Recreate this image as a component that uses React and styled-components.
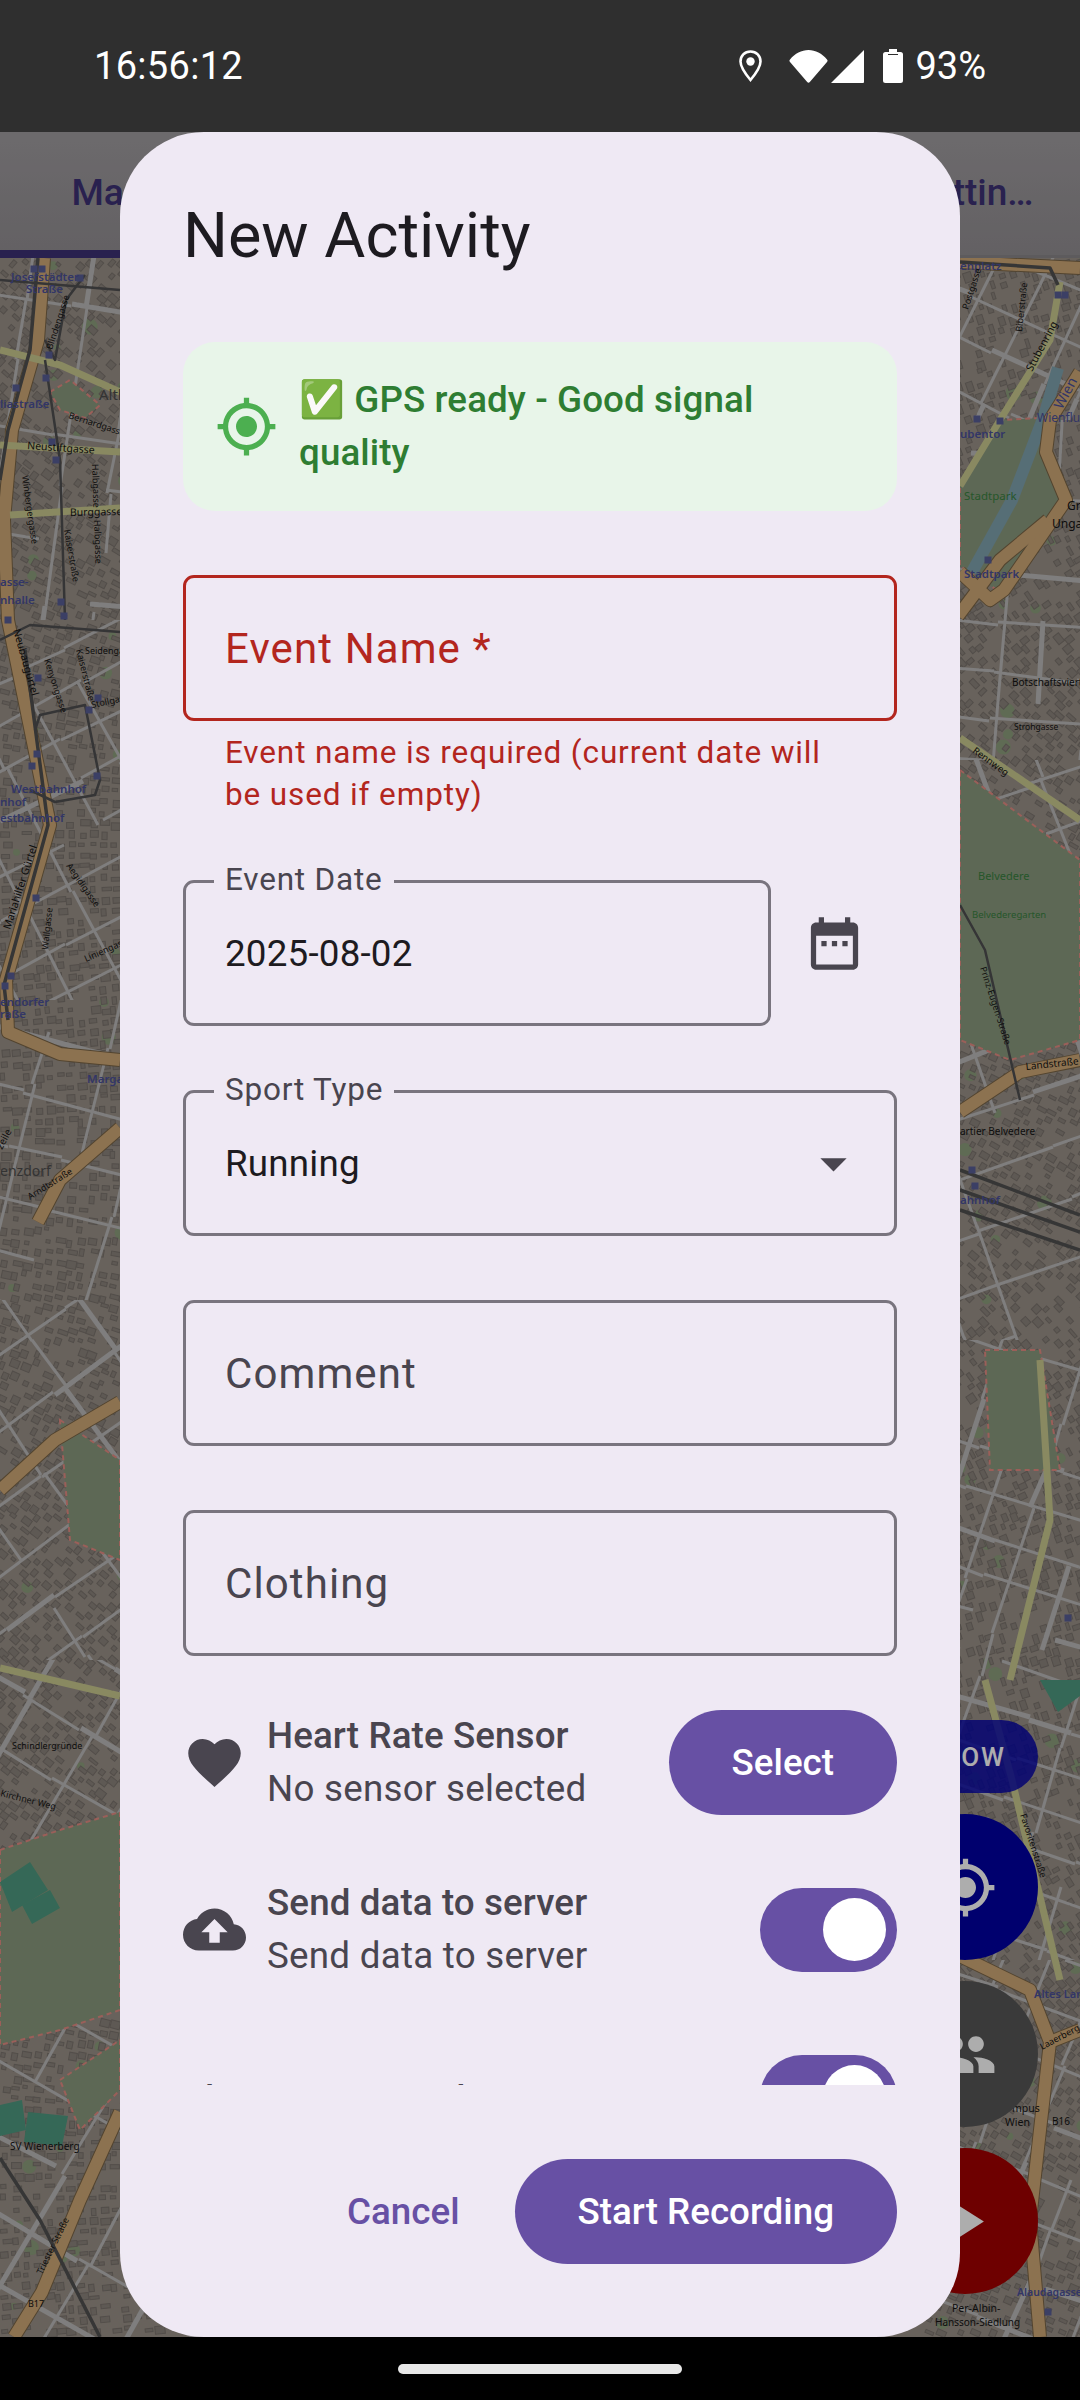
import React, { useMemo } from 'react'
import styled, { createGlobalStyle } from 'styled-components'

const colours = {
  primary: '#6750A4',
  surface: '#EFE9F4',
  onSurface: '#1D1B20',
  variant: '#49454F',
  outline: '#79747E',
  error: '#B3261E',
  tabInk: '#3D3175',
}

const icons = {
  gps: 'M12 8c-2.21 0-4 1.79-4 4s1.79 4 4 4 4-1.79 4-4-1.79-4-4-4zm8.94 3c-.46-4.17-3.77-7.48-7.94-7.94V1h-2v2.06C6.83 3.52 3.52 6.83 3.06 11H1v2h2.06c.46 4.17 3.77 7.48 7.94 7.94V23h2v-2.06c4.17-.46 7.48-3.77 7.94-7.94H23v-2h-2.06zM12 19c-3.87 0-7-3.13-7-7s3.13-7 7-7 7 3.13 7 7-3.13 7-7 7z',
  heart: 'M12 21.35l-1.45-1.32C5.4 15.36 2 12.28 2 8.5 2 5.42 4.42 3 7.5 3c1.74 0 3.41.81 4.5 2.09C13.09 3.81 14.76 3 16.5 3 19.58 3 22 5.42 22 8.5c0 3.78-3.4 6.86-8.55 11.54L12 21.35z',
  cloud: 'M19.35 10.04C18.67 6.59 15.64 4 12 4 9.11 4 6.6 5.64 5.35 8.04 2.34 8.36 0 10.91 0 14c0 3.31 2.69 6 6 6h13c2.76 0 5-2.24 5-5 0-2.64-2.05-4.78-4.65-4.96zM14 13v4h-4v-4H7l5-5 5 5h-3z',
  calendar: 'M9 11H7v2h2v-2zm4 0h-2v2h2v-2zm4 0h-2v2h2v-2zm2-7h-1V2h-2v2H8V2H6v2H5c-1.11 0-1.99.9-1.99 2L3 20c0 1.1.89 2 2 2h14c1.1 0 2-.9 2-2V6c0-1.1-.9-2-2-2zm0 16H5V9h14v11z',
  drop: 'M7 10l5 5 5-5z',
  group: 'M16 11c1.66 0 2.99-1.34 2.99-3S17.66 5 16 5c-1.66 0-3 1.34-3 3s1.34 3 3 3zm-8 0c1.66 0 2.99-1.34 2.99-3S9.66 5 8 5C6.34 5 5 6.34 5 8s1.34 3 3 3zm0 2c-2.33 0-7 1.17-7 3.5V19h14v-2.5c0-2.33-4.67-3.5-7-3.5zm8 0c-.29 0-.62.02-.97.05 1.16.84 1.97 1.97 1.97 3.45V19h6v-2.5c0-2.33-4.67-3.5-7-3.5z',
  play: 'M8 5v14l11-7z',
}

const GlobalStyle = createGlobalStyle`
  html, body {
    margin: 0;
    padding: 0;
    background: #000;
  }
  * {
    box-sizing: border-box;
  }
`

const Icon = ({ name, colour, className }) => (
  <IconSvg viewBox="0 0 24 24" className={className}>
    <path d={icons[name]} fill={colour || 'currentColor'} />
  </IconSvg>
)

const toPoints = (pts) => pts.map((p) => p.join(',')).join(' ')

// map features, in page coordinates
const districts = [
  { x: 0, y: 258, w: 130, h: 362, angle: 8, gap: 60 },
  { x: 0, y: 620, w: 130, h: 380, angle: -28, gap: 46 },
  { x: 0, y: 1000, w: 130, h: 300, angle: 15, gap: 54 },
  { x: 0, y: 1300, w: 130, h: 360, angle: -35, gap: 58 },
  { x: 0, y: 1660, w: 210, h: 677, angle: 30, gap: 66 },
  { x: 950, y: 258, w: 130, h: 162, angle: 25, gap: 44 },
  { x: 950, y: 420, w: 130, h: 340, angle: 5, gap: 42 },
  { x: 950, y: 760, w: 130, h: 580, angle: -20, gap: 50 },
  { x: 950, y: 1340, w: 130, h: 620, angle: 18, gap: 44 },
  { x: 900, y: 1960, w: 180, h: 377, angle: 22, gap: 52 },
]
const parks = [
  [[960, 482], [1000, 420], [1042, 418], [1062, 500], [1000, 592], [960, 566]],
  [[960, 770], [1080, 860], [1080, 1040], [1010, 1060], [960, 1040]],
  [[0, 1850], [60, 1830], [120, 1812], [120, 2010], [60, 2030], [0, 2045]],
  [[50, 392], [70, 380], [100, 405], [85, 418], [60, 410]],
  [[985, 1350], [1040, 1350], [1060, 1470], [990, 1470]],
  [[60, 1420], [120, 1460], [120, 1560], [70, 1540]],
  [[60, 2080], [120, 2040], [120, 2090], [80, 2130]],
]
const sportsFields = [
  [[0, 1882], [30, 1862], [48, 1890], [12, 1912]],
  [[22, 1905], [50, 1890], [60, 1908], [32, 1924]],
  [[0, 2105], [22, 2100], [26, 2130], [0, 2136]],
  [[28, 2112], [68, 2116], [62, 2146], [24, 2142]],
  [[1040, 1680], [1080, 1680], [1080, 1696], [1058, 1712]],
]
const water = [
  [[1058, 368], [1044, 416], [1012, 500], [972, 572]],
]
const motorways = [
  [[44, 258], [38, 340], [12, 430], [4, 520], [8, 620], [50, 825], [6, 980], [8, 1032], [60, 1054], [120, 1060]],
  [[120, 1128], [60, 1180], [38, 1222]],
  [[0, 1490], [55, 1440], [120, 1402]],
  [[120, 2112], [80, 2200], [42, 2292], [14, 2337]],
  [[960, 262], [1080, 268]],
  [[1080, 372], [1050, 420], [1046, 452], [1066, 500], [1004, 590], [990, 600], [960, 572]],
  [[958, 616], [1000, 560], [1048, 520]],
  [[960, 1112], [1020, 1072], [1080, 1060]],
  [[960, 1956], [1030, 1990], [1050, 2042], [1040, 2130], [1030, 2220], [1040, 2337]],
  [[1050, 2042], [1080, 2030]],
]
const yellowRoads = [
  [[0, 350], [60, 365], [120, 392]],
  [[0, 445], [120, 452]],
  [[10, 515], [120, 508]],
  [[1060, 282], [1050, 340], [1000, 420], [960, 486]],
  [[960, 738], [1080, 820]],
  [[985, 1680], [1012, 1780], [1060, 1980]],
  [[1040, 1360], [1050, 1520], [1010, 1680]],
  [[0, 1668], [120, 1696]],
]
const railways = [
  [[38, 258], [30, 350], [8, 430], [0, 480]],
  [[25, 650], [48, 825], [4, 985], [8, 1020]],
  [[960, 262], [1050, 268], [1058, 285]],
  [[0, 2158], [40, 2220], [100, 2337]],
  [[960, 1170], [1080, 1215]],
  [[960, 1190], [1080, 1232]],
  [[960, 1210], [1080, 1250]],
]
const transit = [
  [[45, 340], [55, 360], [66, 300], [85, 275]],
  [[45, 360], [60, 460], [65, 620]],
  [[0, 280], [120, 290]],
  [[0, 640], [30, 625], [120, 632]],
  [[35, 730], [40, 715], [85, 705], [100, 780], [95, 795], [55, 802], [30, 790]],
  [[960, 905], [985, 950], [1020, 1100]],
]
const stations = [
  [34, 269], [42, 269], [80, 278], [49, 355], [46, 378], [16, 388], [52, 442], [56, 460],
  [61, 602], [64, 616], [8, 620], [38, 678], [37, 754], [32, 766], [98, 698], [89, 710],
  [97, 776], [36, 898], [11, 976], [5, 986], [1065, 295], [1058, 295], [1000, 421], [977, 419],
  [988, 560], [972, 1170], [975, 1186], [1068, 1618], [1048, 2312],
]
const labels = [
  ['Josefstädter', 11, 281, 0, 'blue', 11.5, 600],
  ['Straße', 26, 293, 0, 'blue', 11.5, 600],
  ['Blindengasse', 52, 350, -72, 'ink', 9],
  ['Altl', 99, 400, 0, 'faint', 15],
  ['Bernardgasse', 68, 418, 18, 'ink', 9],
  ['liastraße', 0, 408, 0, 'blue', 11.5, 600],
  ['Neustiftgasse', 27, 449, 4, 'ink', 10.5],
  ['Winbergergasse', 22, 476, 82, 'ink', 9],
  ['Halbgasse', 92, 464, 88, 'ink', 9],
  ['Burggasse', 70, 516, -1, 'ink', 10.5],
  ['Halbgasse', 94, 520, 88, 'ink', 9],
  ['Kaiserstraße', 64, 530, 80, 'ink', 9],
  ['asse-', 0, 586, 0, 'blue', 11.5, 600],
  ['nhalle', 0, 604, 0, 'blue', 11.5, 600],
  ['Seidengasse', 85, 654, 0, 'ink', 9],
  ['Neubaugürtel', 13, 630, 74, 'ink', 10.5],
  ['Kenyongasse', 44, 660, 72, 'ink', 9],
  ['Kaiserstraße', 76, 650, 76, 'ink', 9],
  ['Stollgasse', 92, 708, -12, 'ink', 9],
  ['Westbahnhof', 11, 793, 0, 'blue', 11.5, 600],
  ['nhof', 0, 806, 0, 'blue', 11.5, 600],
  ['estbahnhof', 0, 822, 0, 'blue', 11.5, 600],
  ['Mariahilfer Gürtel', 10, 930, -72, 'ink', 10.5],
  ['Aegidigasse', 66, 866, 55, 'ink', 9],
  ['Wallgasse', 48, 950, -84, 'ink', 9],
  ['Liniengasse', 86, 962, -24, 'ink', 9],
  ['endorfer', 0, 1006, 0, 'blue', 11.5, 600],
  ['raße', 0, 1018, 0, 'blue', 11.5, 600],
  ['Marga', 87, 1083, 0, 'blue', 11.5, 600],
  ['zeile', 2, 1150, -62, 'ink', 10],
  ['enzdorf', 0, 1176, 0, 'faint', 14],
  ['Arndtstraße', 30, 1200, -32, 'ink', 9],
  ['Schindlergründe', 12, 1749, 0, 'ink', 9],
  ['Kirchner Weg', 0, 1796, 14, 'ink', 9],
  ['SV Wienerberg', 10, 2150, 0, 'ink', 10],
  ['Triester Straße', 42, 2275, -64, 'ink', 9],
  ['B17', 28, 2307, 0, 'ink', 9],
  ['enplatz', 960, 270, 0, 'blue', 11.5, 600],
  ['Postgasse', 968, 310, -72, 'ink', 9],
  ['Biberstraße', 1022, 332, -84, 'ink', 9],
  ['Stubenring', 1032, 372, -62, 'ink', 10.5],
  ['Wien', 1062, 410, -62, 'blue', 14],
  ['Wienfluss', 1037, 422, 0, 'blue', 12],
  ['ubentor', 960, 438, 0, 'blue', 11.5, 600],
  ['Stadtpark', 964, 500, 0, 'green', 11.5],
  ['Stadtpark', 964, 578, 0, 'blue', 11.5, 600],
  ['Gr', 1067, 510, 0, 'ink', 12],
  ['Ungar', 1052, 528, 0, 'ink', 12],
  ['Botschaftsviertel', 1012, 686, 0, 'ink', 10],
  ['Strohgasse', 1014, 730, 0, 'ink', 8.5],
  ['Rennweg', 972, 752, 36, 'ink', 9.5],
  ['Belvedere', 978, 880, 0, 'green', 11],
  ['Belvederegarten', 972, 918, 0, 'green', 9.5],
  ['Prinz-Eugen-Straße', 980, 968, 72, 'ink', 9],
  ['Landstraße', 1026, 1070, -6, 'ink', 10],
  ['artier Belvedere', 960, 1135, 0, 'ink', 10],
  ['ahnhof', 960, 1204, 0, 'blue', 11.5, 600],
  ['Favoritenstraße', 1020, 1815, 72, 'ink', 9],
  ['Altes Lan', 1034, 1998, 0, 'blue', 11, 600],
  ['Laaerberg', 1042, 2050, -28, 'ink', 9],
  ['mpus', 1012, 2112, 0, 'ink', 10.5],
  ['Wien', 1005, 2126, 0, 'ink', 10.5],
  ['B16', 1052, 2125, 0, 'ink', 10],
  ['Alaudagasse', 1017, 2296, 0, 'blue', 10.5, 600],
  ['Per-Albin-', 952, 2312, 0, 'ink', 10.5],
  ['Hansson-Siedlung', 935, 2326, 0, 'ink', 10],
]
const labelColours = { blue: '#4A5099', ink: '#141414', faint: '#4c4c4c', green: '#38803e' }

const mulberry = (seed) => () => {
  seed |= 0
  seed = (seed + 0x6d2b79f5) | 0
  let t = Math.imul(seed ^ (seed >>> 15), 1 | seed)
  t = (t + Math.imul(t ^ (t >>> 7), 61 | t)) ^ t
  return ((t ^ (t >>> 14)) >>> 0) / 4294967296
}

// one set of streets: a broken grid turned by the district's angle
function districtStreets(d, rand) {
  const cx = d.x + d.w / 2
  const cy = d.y + d.h / 2
  const reach = Math.hypot(d.w, d.h) / 2 + d.gap
  const rad = (d.angle * Math.PI) / 180
  const cos = Math.cos(rad)
  const sin = Math.sin(rad)
  const place = (u, v) => [Math.round(cx + u * cos - v * sin), Math.round(cy + u * sin + v * cos)]
  const lines = []
  const run = (along) => {
    for (let v = -reach; v < reach; v += d.gap * (0.8 + rand() * 0.4)) {
      let u = -reach
      while (u < reach) {
        const length = d.gap * (1 + Math.floor(rand() * 3))
        if (rand() > 0.18) {
          const tilt = (rand() - 0.5) * 8
          lines.push({
            points: along
              ? [place(u, v), place(u + length, v + tilt)]
              : [place(v, u), place(v + tilt, u + length)],
            width: rand() < 0.15 ? 5 : 3,
          })
        }
        u += length
      }
    }
  }
  run(true)
  run(false)
  return lines
}

function buildTexture() {
  const rand = mulberry(1966)
  const strips = [[0, 210], [925, 1080]]
  const houses = []
  const patches = []
  strips.forEach(([from, to]) => {
    for (let y = 258; y < 2337; y += 11) {
      for (let x = from; x < to; x += 11) {
        const angle = 18 + 24 * Math.sin(y / 210) + (x > 500 ? 30 : 0)
        if (rand() < 0.8) {
          houses.push({
            x: x + rand() * 4,
            y: y + rand() * 4,
            w: 4 + rand() * 6,
            h: 3 + rand() * 5,
            a: Math.round(angle),
          })
        }
        if (rand() < 0.025) {
          patches.push({ x: x + rand() * 10, y: y + rand() * 10, r: 3 + rand() * 5 })
        }
      }
    }
  })
  const streets = districts.map((d) => ({ ...d, lines: districtStreets(d, rand) }))
  return { houses, patches, streets }
}

function OsmMap() {
  const { houses, patches, streets } = useMemo(buildTexture, [])
  return (
    <MapCanvas viewBox="0 258 1080 2079">
      <rect x="0" y="258" width="1080" height="2079" fill="#9A9188" />
      {patches.map((p, i) => (
        <circle key={i} cx={p.x} cy={p.y} r={p.r} fill="#8C9E7C" />
      ))}
      {houses.map((h, i) => (
        <rect
          key={i}
          x={h.x}
          y={h.y}
          width={h.w}
          height={h.h}
          fill="#8B837C"
          stroke="#7A736D"
          strokeWidth="1"
          transform={`rotate(${h.a} ${h.x} ${h.y})`}
        />
      ))}
      {streets.map((d, i) => (
        <svg key={i} x={d.x} y={d.y} width={d.w} height={d.h} viewBox={`${d.x} ${d.y} ${d.w} ${d.h}`}>
          {d.lines.map((line, j) => (
            <polyline
              key={j}
              points={toPoints(line.points)}
              fill="none"
              stroke="#BBBABA"
              strokeWidth={line.width}
            />
          ))}
        </svg>
      ))}
      {parks.map((p, i) => (
        <polygon key={i} points={toPoints(p)} fill="#8A9A7E" />
      ))}
      {sportsFields.map((p, i) => (
        <polygon key={i} points={toPoints(p)} fill="#4F9A80" />
      ))}
      {parks.map((p, i) => (
        <polygon key={i} points={toPoints(p)} fill="none" stroke="#E58C84" strokeWidth="2" strokeDasharray="5 4" />
      ))}
      {water.map((w, i) => (
        <polyline key={i} points={toPoints(w)} fill="none" stroke="#7FA2AE" strokeWidth="12" />
      ))}
      {motorways.map((m, i) => (
        <polyline key={i} points={toPoints(m)} fill="none" stroke="#7A6546" strokeWidth="14" strokeLinejoin="round" />
      ))}
      {motorways.map((m, i) => (
        <polyline key={i} points={toPoints(m)} fill="none" stroke="#CFA877" strokeWidth="12" strokeLinejoin="round" />
      ))}
      {yellowRoads.map((r, i) => (
        <polyline key={i} points={toPoints(r)} fill="none" stroke="#CACA90" strokeWidth="7" strokeLinejoin="round" />
      ))}
      {railways.map((r, i) => (
        <polyline key={i} points={toPoints(r)} fill="none" stroke="#505050" strokeWidth="3.500" strokeLinejoin="round" />
      ))}
      {transit.map((r, i) => (
        <polyline key={i} points={toPoints(r)} fill="none" stroke="#4E4E50" strokeWidth="2.500" strokeLinejoin="round" />
      ))}
      {stations.map(([x, y], i) => (
        <rect key={i} x={x - 3.5} y={y - 3.5} width="7" height="7" fill="#585D96" />
      ))}
      {labels.map(([text, x, y, rotate, tone, size, weight], i) => (
        <MapLabel
          key={i}
          x={x}
          y={y}
          fontSize={size}
          fontWeight={weight || 400}
          fill={labelColours[tone]}
          transform={rotate ? `rotate(${rotate} ${x} ${y})` : undefined}
        >
          {text}
        </MapLabel>
      ))}
    </MapCanvas>
  )
}

function StatusBar() {
  return (
    <StatusRow>
      <StatusTime>16:56:12</StatusTime>
      <StatusIcons>
        <StatusGlyph width="23" height="32" viewBox="0 0 23 32">
          <path
            d="M11.5 1.5C5.6 1.5 1.5 6 1.5 11.5 1.5 18 11.5 30 11.5 30S21.5 18 21.5 11.5C21.5 6 17.4 1.5 11.5 1.5Z"
            fill="none"
            stroke="#fff"
            strokeWidth="2.6"
          />
          <circle cx="11.5" cy="11.5" r="4.2" fill="#fff" />
        </StatusGlyph>
        <StatusGlyph $gap={27} width="39" height="33" viewBox="0 0 39 33">
          <path d="M1 9.5C6 3.5 12.5 0 19.5 0S33 3.5 38 9.5c.8 1 .8 1.6 0 2.5L20.8 32c-.8.9-1.8.9-2.6 0L1 12c-.8-.9-.8-1.5 0-2.5Z" fill="#fff" />
        </StatusGlyph>
        <StatusGlyph $gap={3} width="33" height="33" viewBox="0 0 33 33">
          <path d="M33 0V32a1 1 0 0 1-1 1H0Z" fill="#fff" />
        </StatusGlyph>
        <StatusGlyph $gap={19} width="20" height="34" viewBox="0 0 20 34">
          <path d="M6 0h8v3h3.5A2.5 2.5 0 0 1 20 5.5V31.5A2.5 2.5 0 0 1 17.500 34H2.500A2.500 2.500 0 0 1 0 31.500V5.500A2.500 2.500 0 0 1 2.500 3H6Z" fill="#fff" />
          <rect x="5" y="5" width="10" height="1" fill="#2F2F2F" />
        </StatusGlyph>
        <StatusPercent>93%</StatusPercent>
      </StatusIcons>
    </StatusRow>
  )
}

function Background() {
  return (
    <AppContent>
      <TabBar>
        <Tab $active>Map</Tab>
        <Tab>Settin…</Tab>
      </TabBar>
      <MapArea>
        <OsmMap />
        <FabStack>
          <NowPill>NOW</NowPill>
          <Fab $colour="#0000A2">
            <FabIcon name="gps" />
          </Fab>
          <Fab $colour="#565656">
            <FabIcon name="group" />
          </Fab>
          <Fab $colour="#A20000">
            <FabIcon name="play" />
          </Fab>
        </FabStack>
      </MapArea>
    </AppContent>
  )
}

const OptionRow = ({ icon, title, subtitle, action }) => (
  <Row>
    {icon && <RowIcon name={icon} />}
    <RowText $single={!subtitle}>
      <RowTitle>{title}</RowTitle>
      {subtitle && <RowSubtitle>{subtitle}</RowSubtitle>}
    </RowText>
    {action}
  </Row>
)

const Toggle = () => (
  <SwitchTrack role="switch" aria-checked="true">
    <SwitchThumb />
  </SwitchTrack>
)

function ActivityDialog() {
  return (
    <Dialog>
      <DialogTitle>New Activity</DialogTitle>
      <Scroller>
        <FormStack>
          <GpsCard>
            <GpsIcon name="gps" />
            <GpsText>✅ GPS ready - Good signal quality</GpsText>
          </GpsCard>

          <div>
            <Field $error>
              <FieldPlaceholder $error>Event Name *</FieldPlaceholder>
            </Field>
            <HelperText>Event name is required (current date will be used if empty)</HelperText>
          </div>

          <DateRow>
            <Field $grow>
              <FieldLabel>Event Date</FieldLabel>
              <FieldValue>2025-08-02</FieldValue>
            </Field>
            <CalendarButton>
              <CalendarIcon name="calendar" />
            </CalendarButton>
          </DateRow>

          <Field>
            <FieldLabel>Sport Type</FieldLabel>
            <FieldValue>Running</FieldValue>
            <DropIcon name="drop" />
          </Field>

          <Field>
            <FieldPlaceholder>Comment</FieldPlaceholder>
          </Field>

          <Field>
            <FieldPlaceholder>Clothing</FieldPlaceholder>
          </Field>
        </FormStack>

        <RowStack>
          <OptionRow
            icon="heart"
            title="Heart Rate Sensor"
            subtitle="No sensor selected"
            action={<FilledButton>Select</FilledButton>}
          />
          <OptionRow
            icon="cloud"
            title="Send data to server"
            subtitle="Send data to server"
            action={<Toggle />}
          />
          <OptionRow title="Share Device with" action={<Toggle />} />
        </RowStack>
      </Scroller>
      <DialogActions>
        <TextButton>Cancel</TextButton>
        <FilledButton>Start Recording</FilledButton>
      </DialogActions>
    </Dialog>
  )
}

export default function App() {
  return (
    <>
      <GlobalStyle />
      <Screen>
        <StatusBar />
        <Stage>
          <Background />
          <Scrim>
            <ActivityDialog />
          </Scrim>
        </Stage>
        <NavBar>
          <NavPill />
        </NavBar>
      </Screen>
    </>
  )
}

const IconSvg = styled.svg`
  display: block;
  width: 63px;
  height: 63px;
  flex: none;
`

const Screen = styled.div`
  width: 1080px;
  height: 2400px;
  display: flex;
  flex-direction: column;
  overflow: hidden;
  font-family: Roboto, "Noto Sans", sans-serif;
  background: #000;
`

const StatusRow = styled.div`
  height: 132px;
  flex: none;
  padding: 0 94px;
  display: flex;
  align-items: center;
  justify-content: space-between;
  background: #2F2F2F;
  color: #fff;
`

const StatusTime = styled.span`
  font-size: 38px;
  letter-spacing: 0.3px;
`

const StatusIcons = styled.div`
  display: flex;
  align-items: center;
`

const StatusGlyph = styled.svg`
  display: block;
  flex: none;
  margin-left: ${(p) => p.$gap || 0}px;
`

const StatusPercent = styled.span`
  font-size: 38px;
  margin-left: 12px;
`

const Stage = styled.div`
  flex: 1;
  position: relative;
  min-height: 0;
`

const AppContent = styled.div`
  height: 100%;
  display: flex;
  flex-direction: column;
`

const TabBar = styled.div`
  height: 126px;
  flex: none;
  display: flex;
  justify-content: space-between;
  background: linear-gradient(#A09DA0, #938F93);
  border-bottom: 3px solid #8A868A;
`

const Tab = styled.div`
  width: 216px;
  position: relative;
  display: flex;
  align-items: center;
  justify-content: center;
  padding-bottom: 3px;
  font-size: 37px;
  font-weight: 500;
  color: ${colours.tabInk};

  &::after {
    content: ${(p) => (p.$active ? '""' : 'none')};
    position: absolute;
    left: 0;
    right: 0;
    bottom: -3px;
    height: 8px;
    background: ${colours.tabInk};
  }
`

const MapArea = styled.div`
  flex: 1;
  position: relative;
  min-height: 0;
  overflow: hidden;
`

const MapCanvas = styled.svg`
  display: block;
  width: 1080px;
  height: 2079px;
`

const MapLabel = styled.text`
  font-family: "Noto Sans", sans-serif;
`

const FabStack = styled.div`
  position: absolute;
  right: 42px;
  bottom: 43px;
  display: flex;
  flex-direction: column;
  align-items: flex-end;
  gap: 21px;
`

const NowPill = styled.div`
  height: 73px;
  padding: 0 32px;
  display: flex;
  align-items: center;
  border-radius: 37px;
  background: rgba(0, 0, 170, 0.82);
  color: #fff;
  font-size: 26px;
  font-weight: 500;
  letter-spacing: 2px;
`

const Fab = styled.div`
  width: 146px;
  height: 146px;
  border-radius: 50%;
  display: flex;
  align-items: center;
  justify-content: center;
  background: ${(p) => p.$colour};
`

const FabIcon = styled(Icon).attrs({ colour: '#fff' })``

const Scrim = styled.div`
  position: absolute;
  inset: 0;
  display: flex;
  justify-content: center;
  background: rgba(0, 0, 0, 0.32);
`

const Dialog = styled.div`
  width: 840px;
  height: 100%;
  padding: 62px 63px 73px;
  display: flex;
  flex-direction: column;
  background: ${colours.surface};
  border-radius: 84px;
`

const DialogTitle = styled.div`
  flex: none;
  height: 84px;
  margin-bottom: 64px;
  font-size: 63px;
  line-height: 84px;
  color: ${colours.onSurface};
`

const Scroller = styled.div`
  flex: 1;
  min-height: 0;
  overflow: hidden;
`

const FormStack = styled.div`
  display: flex;
  flex-direction: column;
  gap: 64px;
`

const GpsCard = styled.div`
  min-height: 169px;
  padding: 0 32px;
  display: flex;
  align-items: center;
  gap: 21px;
  background: #E8F5E9;
  border-radius: 32px;
`

const GpsIcon = styled(Icon).attrs({ colour: '#4CAF50' })``

const GpsText = styled.div`
  font-size: 36.75px;
  line-height: 52.5px;
  font-weight: 500;
  letter-spacing: 0.1px;
  color: #2E7D32;
`

const Field = styled.div`
  position: relative;
  flex: ${(p) => (p.$grow ? 1 : 'none')};
  height: 146px;
  padding: 0 39px;
  display: flex;
  align-items: center;
  border: 3px solid ${(p) => (p.$error ? colours.error : colours.outline)};
  border-radius: 11px;
`

const FieldLabel = styled.span`
  position: absolute;
  left: 28px;
  top: -24px;
  padding: 0 11px;
  background: ${colours.surface};
  font-size: 31.5px;
  line-height: 42px;
  letter-spacing: 0.8px;
  color: ${colours.variant};
`

const FieldValue = styled.span`
  font-size: 36.75px;
  letter-spacing: 0.2px;
  color: ${colours.onSurface};
`

const FieldPlaceholder = styled.span`
  font-size: 42px;
  letter-spacing: 1.1px;
  color: ${(p) => (p.$error ? colours.error : colours.variant)};
`

const HelperText = styled.div`
  margin-top: 11px;
  padding: 0 42px;
  font-size: 31.5px;
  line-height: 42px;
  letter-spacing: 0.87px;
  color: ${colours.error};
`

const DateRow = styled.div`
  display: flex;
  align-items: flex-start;
`

const CalendarButton = styled.div`
  width: 126px;
  height: 126px;
  flex: none;
  display: flex;
  align-items: center;
  justify-content: center;
`

const CalendarIcon = styled(Icon).attrs({ colour: colours.variant })``

const DropIcon = styled(Icon).attrs({ colour: colours.variant })`
  position: absolute;
  right: 29px;
  top: 39px;
`

const RowStack = styled.div`
  margin-top: 54px;
  display: flex;
  flex-direction: column;
  gap: 62px;
`

const Row = styled.div`
  min-height: 105px;
  display: flex;
  align-items: center;
  gap: 21px;
`

const RowIcon = styled(Icon).attrs({ colour: colours.variant })``

const RowText = styled.div`
  flex: 1;
  min-width: 0;
  padding-top: ${(p) => (p.$single ? 5 : 0)}px;
`

const RowTitle = styled.div`
  font-size: 36.75px;
  line-height: 52.5px;
  font-weight: 500;
  letter-spacing: 0.1px;
  color: ${colours.variant};
`

const RowSubtitle = styled.div`
  font-size: 36.75px;
  line-height: 52.5px;
  letter-spacing: 0.25px;
  color: ${colours.variant};
`

const SwitchTrack = styled.div`
  width: 137px;
  height: 84px;
  flex: none;
  padding-right: 11px;
  display: flex;
  align-items: center;
  justify-content: flex-end;
  background: ${colours.primary};
  border-radius: 42px;
`

const SwitchThumb = styled.div`
  width: 63px;
  height: 63px;
  border-radius: 50%;
  background: #fff;
`

const DialogActions = styled.div`
  flex: none;
  margin-top: 74px;
  display: flex;
  align-items: center;
  justify-content: flex-end;
  gap: 55px;
`

const FilledButton = styled.div`
  height: 105px;
  flex: none;
  padding: 0 63px;
  display: flex;
  align-items: center;
  border-radius: 53px;
  background: ${colours.primary};
  color: #fff;
  font-size: 36.75px;
  font-weight: 500;
`

const TextButton = styled.div`
  font-size: 36.75px;
  font-weight: 500;
  color: ${colours.primary};
`

const NavBar = styled.div`
  height: 63px;
  flex: none;
  display: flex;
  justify-content: center;
  padding-top: 27px;
  background: #000;
`

const NavPill = styled.div`
  width: 284px;
  height: 10px;
  border-radius: 5px;
  background: #E8E8E8;
`
